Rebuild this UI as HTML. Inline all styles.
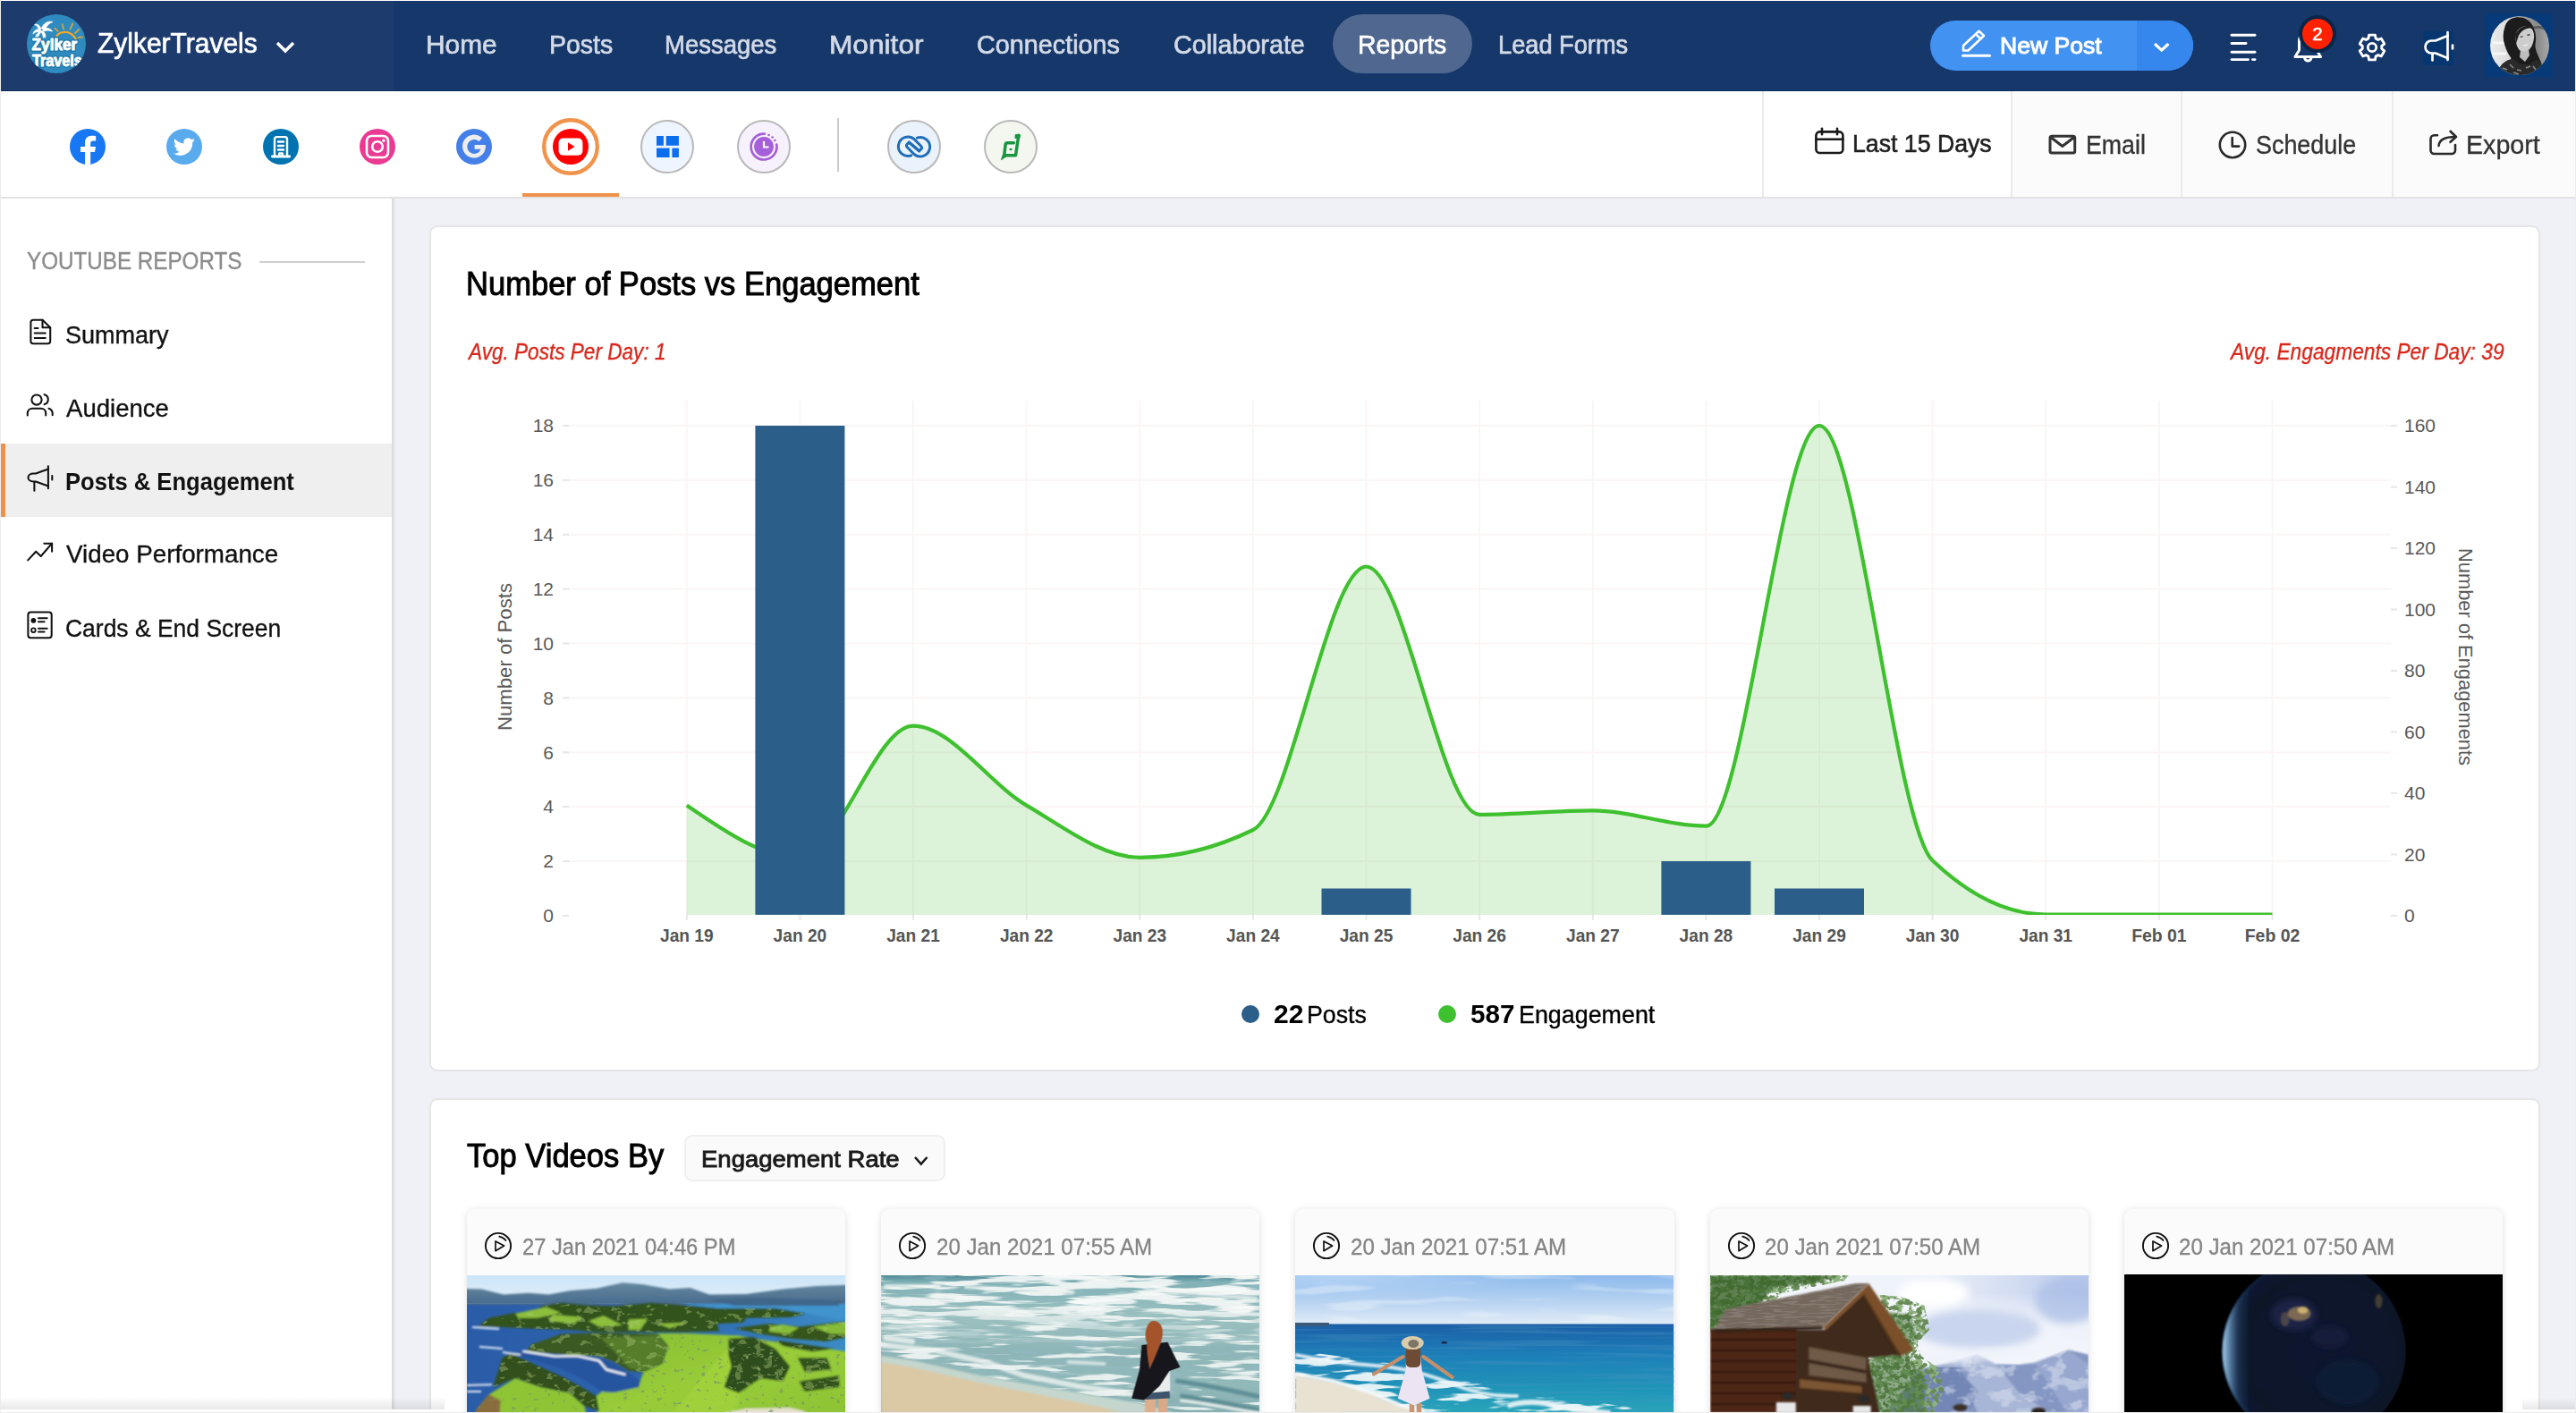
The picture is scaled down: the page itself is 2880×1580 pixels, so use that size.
<!DOCTYPE html>
<html lang="en"><head><meta charset="utf-8"><title>ZylkerTravels - YouTube Reports</title>
<style>
html,body{margin:0;padding:0}
body{width:2880px;height:1580px;overflow:hidden;background:#fff;position:relative;font-family:"Liberation Sans",sans-serif}
.a{position:absolute}
.t{position:absolute;line-height:1;white-space:pre;transform-origin:0 0}
.card{position:absolute;box-sizing:border-box;background:#fff;border:2px solid #e5e5e5;border-radius:9px}
.vc{position:absolute;top:1352px;width:423.2px;height:260px;background:#fbfbfb;border-radius:9px;box-shadow:0 1px 9px rgba(0,0,0,.13);overflow:hidden}
</style></head>
<body>
<div class="a" style="left:1px;top:1px;width:439px;height:101px;background:#1e3b6e;"></div>
<div class="a" style="left:440px;top:1px;width:2439px;height:101px;background:#16376a;"></div>
<div class="a" style="left:1px;top:100.5px;width:2878px;height:1.5px;background:#0f2c5c;"></div>
<svg class="a" style="left:30px;top:16px" width="66" height="66" viewBox="0 0 66 66" >
<defs><clipPath id="lgc"><circle cx="33" cy="33" r="33"/></clipPath></defs>
<circle cx="33" cy="33" r="33" fill="#2f8bbf"/>
<g clip-path="url(#lgc)">
<g fill="#fff" stroke="#fff" stroke-width=".8" stroke-linejoin="round">
<path d="M16.400 15.800C18.500 9.500 24 7.200 28.900 8.500c-4.500 1.500-7 4.500-8.500 9.300z"/>
<path d="M15.800 16.200C14.500 12 11.500 10.500 8.500 11.300c2.800 1.300 4.300 3.500 5.200 6.300z"/>
<path d="M15 17c-4.200-1-7.500 1.700-8.100 5.100 2.600-2.600 5.400-3.300 8.600-2.600z"/>
<path d="M18 16.500c4.400-2 8.900-.6 10.500 2.600-3.500-1.500-6.500-1.400-9.700 0z"/>
<path d="M15.200 18.200c-3 2.300-5 5-5.700 7.300l2.900.2c.8-2.200 2.300-4.600 4.600-6.600z"/>
<path d="M17.200 18.300c2.800 1.600 4.100 4.300 3.600 7.500l-2.800.1c.3-2.500-.5-4.700-2.300-6.500z"/>
</g>
<path d="M33.600 23.700C38 19 48.500 17 54.600 27.500" fill="none" stroke="#f5a623" stroke-width="2.300" stroke-linecap="round"/>
<g stroke="#f5a623" stroke-width="1.700" stroke-linecap="round" opacity=".9">
<path d="M31.200 15.500l3.500 3.300"/><path d="M39.600 11.200l1.600 5.300"/><path d="M51.300 10.500l-2.800 6.200"/><path d="M58.500 16.800l-4.600 4.200"/><path d="M62 25.300l-4.600.9"/>
</g>
<g font-family="'Liberation Sans',sans-serif" font-weight="700">
<g fill="#1f78a8" stroke="#1f78a8" stroke-width="3.600" stroke-linejoin="round">
<text x="5.600" y="40" font-size="17.500" textLength="50.600" lengthAdjust="spacingAndGlyphs">Zylker</text>
<text x="5.900" y="57.800" font-size="17.500" textLength="56" lengthAdjust="spacingAndGlyphs">Travels</text></g>
<g fill="#fff" stroke="#fff" stroke-width=".9" stroke-linejoin="round">
<text x="5.600" y="40" font-size="17.500" textLength="50.600" lengthAdjust="spacingAndGlyphs">Zylker</text>
<text x="5.900" y="57.800" font-size="17.500" textLength="56" lengthAdjust="spacingAndGlyphs">Travels</text></g>
</g>
</g></svg>
<svg class="a" style="left:304px;top:41.6px" width="30" height="21" viewBox="0 0 30 21" ><path d="M6 6L15.0 15L24 6" fill="none" stroke="#fff" stroke-width="3.5" stroke-linecap="butt" stroke-linejoin="miter"/></svg>
<div class="a" style="left:1490px;top:16px;width:156px;height:66px;background:#50688f;border-radius:33px"></div>
<div class="a" style="left:2158px;top:23px;width:294px;height:56px;border-radius:28px;background:#4292f2;overflow:hidden"><div class="a" style="left:230.5px;top:0;width:64px;height:56px;background:#3587ee"></div></div>
<svg class="a" style="left:2193px;top:33px" width="34" height="32" viewBox="0 0 34 32" ><g fill="none" stroke="#fff" stroke-width="2.600" stroke-linejoin="round" stroke-linecap="round">
<path d="M2 23.500V18L19.500 1.800 25 7 7.500 23.500z"/><path d="M16 5.200l5.500 5.200"/><path d="M1.500 29.300h30" stroke-width="3"/></g></svg>
<svg class="a" style="left:2403.2px;top:42.9px" width="27.4" height="19.1" viewBox="0 0 27.4 19.1" ><path d="M6 6L13.7 13.1L21.4 6" fill="none" stroke="#fff" stroke-width="3.2" stroke-linecap="butt" stroke-linejoin="miter"/></svg>
<svg class="a" style="left:2493px;top:37px" width="30" height="32" viewBox="0 0 30 32" ><g stroke="#fff" stroke-width="2.900" stroke-linecap="round">
<path d="M2 2.200h26"/><path d="M2 11.500h16"/><path d="M2 21.300h26"/><path d="M2 29.600h18.500"/><path d="M25.500 29.600h2.500"/></g></svg>
<svg class="a" style="left:2564px;top:33px" width="33" height="38" viewBox="0 0 33 38" ><g fill="none" stroke="#fff" stroke-width="3" stroke-linejoin="round" stroke-linecap="round">
<path d="M2 30.500h28.500l-4.500-7.500V13.500C26 7 21.500 2.500 16.200 2.500S6.500 7 6.500 13.500V23z"/>
<path d="M12.500 31.500c.5 2.500 2 3.500 3.800 3.500s3.300-1 3.800-3.500"/></g></svg>
<div class="a" style="left:2570px;top:17px;width:42px;height:42px;border-radius:50%;background:#0b2549"></div><div class="a" style="left:2574px;top:21px;width:34px;height:34px;border-radius:50%;background:#ff2100"></div><span class="a" style="left:2574px;top:21px;width:34px;height:34px;line-height:34px;text-align:center;color:#fff;font-size:20.500px;-webkit-text-stroke:.5px #fff">2</span>
<svg class="a" style="left:2634px;top:35px" width="36" height="36" viewBox="0 0 36 36" ><path d="M14.59 4.11L21.41 4.11L22.04 7.88L24.75 9.44L28.32 8.10L31.73 14.01L28.79 16.44L28.79 19.56L31.73 21.99L28.32 27.90L24.75 26.56L22.04 28.12L21.41 31.89L14.59 31.89L13.96 28.12L11.25 26.56L7.68 27.90L4.27 21.99L7.21 19.56L7.21 16.44L4.27 14.01L7.68 8.10L11.25 9.44L13.96 7.88Z" fill="none" stroke="#fff" stroke-width="2.900" stroke-linejoin="round"/><circle cx="18" cy="18" r="4.700" fill="none" stroke="#fff" stroke-width="2.800"/></svg>
<div class="a" style="left:2709px;top:35px;width:34px;height:38px;background:#06366f;"></div>
<svg class="a" style="left:2709.3px;top:33.3px" width="36.0" height="38.0" viewBox="0 0 36 38"><g fill="none" stroke="#fff" stroke-width="2.7" stroke-linecap="round" stroke-linejoin="round">
<path d="M27.500 3v31"/><path d="M27.500 7L14 12.500H9.500C5.500 12.500 2.500 15.500 2.500 19.500s3 7 7 7H14L27.500 32"/><path d="M10.500 27v7.500"/><path d="M33 17.500v4"/></g></svg>
<div class="a" style="left:2779px;top:15px;width:75px;height:71px;background:#063a78;"></div>
<svg class="a" style="left:2784px;top:18px" width="66" height="66" viewBox="0 0 66 66" ><defs><clipPath id="avc"><circle cx="33" cy="33" r="33"/></clipPath>
<linearGradient id="avbg" x1="0" x2="1"><stop offset="0" stop-color="#ececec"/><stop offset=".3" stop-color="#dcdcdc"/><stop offset=".55" stop-color="#a2a2a2"/><stop offset=".8" stop-color="#8a8a8a"/><stop offset="1" stop-color="#a8a8a8"/></linearGradient>
<filter id="avb" x="-10%" y="-10%" width="120%" height="120%"><feGaussianBlur stdDeviation="0.700"/></filter></defs>
<g clip-path="url(#avc)">
<rect width="66" height="66" fill="url(#avbg)"/>
<g filter="url(#avb)">
<path d="M46 14c6-3 12-2 18 2" stroke="#5a5a5a" stroke-width="2.500" fill="none"/>
<path d="M3 30h14M2 42h16" stroke="#f6f6f6" stroke-width="3" fill="none"/>
<path d="M28.400 1.400C22 2.500 18 6 16.500 12c-2.500 7-2.500 14 0 21 1.500 5 3.500 9 7 14l-6 19h34l6-13c-2-4-3.500-8-5.500-12.500 -1-4-1.800-6-1.500-9 1.500-7 .5-14-2.500-20C45 5 38 0 28.400 1.400z" fill="#1b1b1b"/>
<path d="M30 17c3-5 9-7 14.500-4.500 3.500 2 5 7 4.500 12-.6 6-3 11.500-7 14.500-3.500 2.500-7.500 1.500-10-2-3.500-5-4.500-13-2-20z" fill="#cdcdcd"/>
<path d="M28.500 22c1-6 6-11 14-11l4 2.500c-6-.5-11 2-14.500 8l-3 9z" fill="#1b1b1b"/>
<path d="M34 38c3 2 6.500 1.500 9-1l1 7-5 7-6-5z" fill="#bdbdbd"/>
<path d="M11 57c3-5 8-8 14-9.500l8 6 10 1 9-6 6 6-4 14H9z" fill="#2c2c2c"/>
<path d="M14 58l5 2M22 54l4 4M30 60l5 1M40 58l5-2M48 56l3 4M26 63l6 2" stroke="#8a8a8a" stroke-width="1.500" fill="none"/>
<path d="M35.500 31.500c2.500 1.500 5.500 1 7.500-1.500-1 3.500-4.500 5-7.500 1.500z" fill="#f4f4f4"/>
<path d="M33.500 23.500l3-1M41.500 21.500l3-.8" stroke="#333" stroke-width="1.300"/>
</g></g></svg>
<div class="a" style="left:1px;top:102px;width:2878px;height:118px;background:#fff;"></div>
<div class="a" style="left:2250px;top:102px;width:629px;height:118px;background:#fbfbfb;"></div>
<div class="a" style="left:1970px;top:102px;width:2px;height:118px;background:#ebebeb;"></div>
<div class="a" style="left:2248px;top:102px;width:2px;height:118px;background:#ebebeb;"></div>
<div class="a" style="left:2438px;top:102px;width:2px;height:118px;background:#ebebeb;"></div>
<div class="a" style="left:2674px;top:102px;width:2px;height:118px;background:#ebebeb;"></div>
<div class="a" style="left:1px;top:220px;width:2878px;height:2.2px;background:#e3e3e4;"></div>
<div class="a" style="left:34px;top:222px;width:404px;height:4px;background:linear-gradient(to bottom,rgba(0,0,0,.04),rgba(0,0,0,0))"></div>
<div class="a" style="left:584px;top:216px;width:108px;height:4px;background:#f0914a;"></div>
<svg class="a" style="left:77.85px;top:143.85px" width="40" height="40" viewBox="0 0 40 40" ><defs><clipPath id="fbc"><circle cx="20" cy="20" r="20"/></clipPath></defs>
<circle cx="20" cy="20" r="20" fill="#1877f2"/>
<path clip-path="url(#fbc)" d="M17 41V26h-5v-6h5v-4.500c0-5 3-7.800 7.500-7.800 1.800 0 3.200.2 4.700.4v5.400h-2.700c-2.500 0-3.300 1.300-3.300 3.100V20h5.800l-1 6h-4.800v15z" fill="#fff"/></svg>
<svg class="a" style="left:185.9px;top:143.85px" width="40" height="40" viewBox="0 0 40 40" ><circle cx="20" cy="20" r="20" fill="#5aabee"/>
<path d="M31.800 12.600c-.9.400-1.800.7-2.800.8 1-.6 1.800-1.600 2.100-2.700-.9.600-2 1-3.100 1.200a4.900 4.900 0 0 0-8.400 4.500c-4.100-.2-7.700-2.200-10.100-5.100-1.300 2.200-.7 5.100 1.500 6.500-.8 0-1.600-.2-2.200-.6 0 2.400 1.700 4.400 3.900 4.900-.7.200-1.500.2-2.200.1.600 2 2.400 3.400 4.600 3.400a9.900 9.900 0 0 1-7.300 2 13.900 13.900 0 0 0 21.400-12.400c1-.7 1.800-1.600 2.600-2.600z" fill="#fff"/></svg>
<svg class="a" style="left:293.9px;top:143.85px" width="40" height="40" viewBox="0 0 40 40" ><circle cx="20" cy="20" r="20" fill="#0073b1"/>
<g fill="none" stroke="#fff" stroke-width="2.400" stroke-linecap="round" stroke-linejoin="round">
<path d="M13 30.500V11.500c0-1.400 1-2.400 2.400-2.400h9.200c1.400 0 2.400 1 2.400 2.400v19"/><path d="M10.300 31h19.400" stroke-width="2.800"/>
<path d="M17 14.500h6M17 19h6M17 23.500h6"/><path d="M18.200 30.500v-3h3.600v3"/></g></svg>
<svg class="a" style="left:402px;top:143.85px" width="40" height="40" viewBox="0 0 40 40" ><circle cx="20" cy="20" r="20" fill="#ea3a93"/>
<rect x="8" y="8" width="24" height="24" rx="5.500" fill="none" stroke="#fff" stroke-width="2.600"/>
<circle cx="20" cy="20" r="5.800" fill="none" stroke="#fff" stroke-width="2.600"/><circle cx="26.800" cy="13.200" r="1.700" fill="#fff"/></svg>
<svg class="a" style="left:509.9px;top:143.85px" width="40" height="40" viewBox="0 0 40 40" ><circle cx="20" cy="20" r="20" fill="#4480e8"/>
<path d="M32.600 18H20.600v4.800h6.700c-.8 3.300-3.600 5.200-7 5.200a8 8 0 1 1 5.200-14.100l3.600-3.600A13 13 0 1 0 33 20c0-.7-.1-1.400-.4-2z" fill="#eee"/></svg>
<svg class="a" style="left:606px;top:131.85px" width="64" height="64" viewBox="0 0 64 64" ><circle cx="32" cy="32" r="29.800" fill="#fff" stroke="#f0944d" stroke-width="4.400"/>
<circle cx="32" cy="32" r="20" fill="#f00"/><rect x="18.600" y="22.500" width="26.800" height="19.200" rx="5" fill="#fff"/><path d="M29 27.300l7.500 4.700-7.500 4.700z" fill="#f00"/></svg>
<div class="a" style="left:716px;top:133.85px;width:60px;height:60px;box-sizing:border-box;border:2.200px solid #b9b9b9;border-radius:50%;background:#eff5ff"></div>
<svg class="a" style="left:733.5px;top:151.7px" width="25" height="24.4" viewBox="0 0 25 24.4" ><g fill="#0b6ef0"><rect x="0" y="0" width="7.900" height="10.800"/><rect x="10.700" y="0" width="14.200" height="10.800"/><rect x="0" y="13.600" width="14.500" height="10.700"/><rect x="17.400" y="13.600" width="7.500" height="10.700"/></g></svg>
<div class="a" style="left:824px;top:133.85px;width:60px;height:60px;box-sizing:border-box;border:2.200px solid #b9b9b9;border-radius:50%;background:#f7f1fd"></div>
<svg class="a" style="left:837px;top:146.85px" width="34" height="34" viewBox="0 0 34 34" ><circle cx="17" cy="17" r="10.900" fill="#a55fd8"/>
<path d="M17.800 2.700A14.400 14.400 0 1 0 31.200 14.500" fill="none" stroke="#a55fd8" stroke-width="2.700" stroke-linecap="round"/>
<g fill="#a55fd8"><circle cx="22.500" cy="4" r="1.300"/><circle cx="26.500" cy="6.500" r="1.300"/><circle cx="29.300" cy="10" r="1.300"/></g>
<path d="M17 11v6.500h5.500" fill="none" stroke="#fff" stroke-width="2.200"/></svg>
<div class="a" style="left:936px;top:132px;width:2px;height:60px;background:#cbcbcb"></div>
<div class="a" style="left:992px;top:133.85px;width:60px;height:60px;box-sizing:border-box;border:2.200px solid #b9b9b9;border-radius:50%;background:#eaf2fb"></div>
<svg class="a" style="left:1000px;top:148.85px" width="44" height="30" viewBox="0 0 44 30" ><g fill="none" stroke="#1f6db8" stroke-width="3" stroke-linecap="round" stroke-linejoin="round" transform="translate(22 15)">
<path d="M-3.42 9.82A10.7 10.7 0 1 1 -0.02 -8.50L7.60 -0.70A2.6 2.6 0 0 1 4.26 3.28L-5.70 -5.08"/><path d="M-3.42 9.82A10.7 10.7 0 1 1 -0.02 -8.50L7.60 -0.70A2.6 2.6 0 0 1 4.26 3.28L-5.70 -5.08" transform="rotate(180)"/></g></svg>
<div class="a" style="left:1099.8px;top:133.85px;width:60px;height:60px;box-sizing:border-box;border:2.200px solid #b9b9b9;border-radius:50%;background:#f3f7f0"></div>
<svg class="a" style="left:1115.6px;top:146.85px" width="28" height="34" viewBox="0 0 28 34" ><g transform="translate(14 17)"><g fill="none" stroke="#1a9641" stroke-width="3.500" stroke-linejoin="round" stroke-linecap="round">
<path d="M3.400 -4.300H-3.600c-1.300 0-2.100.7-2.300 2L-7.300 9.800H5.500L8.800 -12.400"/></g>
<path d="M4.800 -13.800l4.300-.5c1.200-.1 2 .7 1.800 1.900l-.5 3-5.900.5z" fill="#1a9641"/>
<path d="M-9 9.500l-1.500 5.200 6-4.200z" fill="#1a9641" stroke="#1a9641" stroke-width="1" stroke-linejoin="round"/>
<ellipse cx="0" cy="3" rx="1.700" ry="1.300" fill="#1a9641"/></g></svg>
<svg class="a" style="left:2027px;top:142px" width="37" height="32" viewBox="0 0 37 32" ><g fill="none" stroke="#1a1a1a" stroke-width="2.600" stroke-linecap="round">
<rect x="3.400" y="5.400" width="30" height="23.600" rx="4"/><path d="M3.400 13.800h30"/><path d="M10 1.800v6.500M27 1.800v6.500"/></g></svg>
<svg class="a" style="left:2289px;top:149px" width="34" height="26" viewBox="0 0 34 26" ><g fill="none" stroke="#333" stroke-width="3" stroke-linejoin="round" stroke-linecap="round">
<rect x="3" y="3.200" width="27.700" height="18.800" rx="2"/><path d="M4.500 5l12.300 9.500L29.200 5"/></g></svg>
<svg class="a" style="left:2479px;top:144.7px" width="34" height="34" viewBox="0 0 34 34" ><g fill="none" stroke="#2a2a2a" stroke-width="2.600" stroke-linecap="round" stroke-linejoin="round">
<circle cx="17" cy="17" r="14.200"/><path d="M16.700 9v9.600h7.500"/></g></svg>
<svg class="a" style="left:2714px;top:144px" width="36" height="32" viewBox="0 0 36 32" ><g fill="none" stroke="#2a2a2a" stroke-width="2.600" stroke-linecap="round" stroke-linejoin="round">
<path d="M11 7.300H7.500c-2.300 0-4 1.700-4 4V24c0 2.300 1.700 4 4 4H27c2.300 0 4-1.700 4-4v-6"/>
<path d="M12.500 19c.5-6.500 6-10 19-10"/><path d="M25.500 2.800L32 9l-6.500 5.800"/></g></svg>
<div class="a" style="left:440px;top:222.2px;width:2439px;height:1356.8px;background:#eff1f6;"></div>
<div class="a" style="left:1px;top:222.2px;width:437px;height:1356.8px;background:#fff;"></div>
<div class="a" style="left:438px;top:222.2px;width:2px;height:1356.8px;background:#dcdcdc;"></div>
<div class="a" style="left:440px;top:222.2px;width:3px;height:1356.8px;background:linear-gradient(to right,rgba(0,0,0,.05),rgba(0,0,0,0))"></div>
<div class="a" style="left:1px;top:496px;width:437px;height:82px;background:#efefef;"></div>
<div class="a" style="left:1px;top:496px;width:5px;height:82px;background:#f0914a;"></div>
<div class="a" style="left:290px;top:291.7px;width:118px;height:2px;background:#cfcfcf;"></div>
<svg class="a" style="left:30px;top:354px" width="30" height="34" viewBox="0 0 30 34" ><g fill="none" stroke="#111" stroke-width="2.050" stroke-linecap="round" stroke-linejoin="round"><path d="M17.500 3.700H7.200c-1.700 0-2.800 1.200-2.800 2.800v21c0 1.700 1.200 2.800 2.800 2.800h16.200c1.700 0 2.800-1.200 2.800-2.800V12.300z"/><path d="M17.500 3.700v8.600h8.700"/>
<path d="M8.700 12.900h3.800M8.700 18.400h12.100M8.700 24h12.100"/></g></svg>
<svg class="a" style="left:28px;top:438px" width="34" height="30" viewBox="0 0 34 30" ><g fill="none" stroke="#111" stroke-width="2.050" stroke-linecap="round" stroke-linejoin="round"><circle cx="13" cy="9" r="5.600"/><path d="M2.800 26.500v-2.300c0-3.200 2.400-5.500 5.500-5.500h9.400c3.200 0 5.500 2.400 5.500 5.500v2.300"/>
<path d="M21.500 3.200c2.600.6 4.300 2.900 4.300 5.500s-1.700 4.800-4.300 5.500"/><path d="M26.500 18.800c2.500.8 4.200 3 4.200 5.600v1.800"/></g></svg>
<svg class="a" style="left:28px;top:518px" width="34" height="34" viewBox="0 0 34 34" ><g fill="none" stroke="#111" stroke-width="2.050" stroke-linecap="round" stroke-linejoin="round"><path d="M25.900 3.200v25"/><path d="M25.900 6.500L12 11.500H9.500C6 11.500 3.500 13.300 3.500 16s2.500 4.500 6 4.500H12L25.900 25.500"/><path d="M10.400 21.500v9.300"/><path d="M30.300 14v4.500"/></g></svg>
<svg class="a" style="left:28px;top:604px" width="34" height="26" viewBox="0 0 34 26" ><g fill="none" stroke="#111" stroke-width="2.050" stroke-linecap="round" stroke-linejoin="round"><path d="M3.200 22.400l9-9.700 5.500 5.300L30.100 3.700"/><path d="M21.300 3.700h8.800v9"/></g></svg>
<svg class="a" style="left:28px;top:681px" width="34" height="36" viewBox="0 0 34 36" ><g fill="none" stroke="#111" stroke-width="2.050" stroke-linecap="round" stroke-linejoin="round"><rect x="3.400" y="3.500" width="26.300" height="28.700" rx="3"/><path d="M15 10.300h9.700M15 14.200h6.600M15 21.700h9.700M15 25.600h6.600" stroke-width="2"/><circle cx="9.400" cy="23.700" r="2.300" stroke-width="1.800"/></g><circle cx="9.400" cy="12.800" r="2.900" fill="#111"/></svg>
<div class="card" style="left:480px;top:252.2px;width:2360px;height:945.8px"></div>
<div class="card" style="left:480px;top:1227.8px;width:2360px;height:420px"></div>
<svg class="a" style="left:0;top:0" width="2880" height="1580" viewBox="0 0 2880 1580" font-family="'Liberation Sans',sans-serif">
<rect x="629" y="1022.9" width="7" height="2" fill="#e6e6e6"/>
<rect x="635" y="962.0" width="2038" height="2" fill="#fbf5f5"/>
<rect x="629" y="962.0" width="7" height="2" fill="#e6e6e6"/>
<rect x="635" y="901.1" width="2038" height="2" fill="#fbf5f5"/>
<rect x="629" y="901.1" width="7" height="2" fill="#e6e6e6"/>
<rect x="635" y="840.3" width="2038" height="2" fill="#fbf5f5"/>
<rect x="629" y="840.3" width="7" height="2" fill="#e6e6e6"/>
<rect x="635" y="779.4" width="2038" height="2" fill="#fbf5f5"/>
<rect x="629" y="779.4" width="7" height="2" fill="#e6e6e6"/>
<rect x="635" y="718.5" width="2038" height="2" fill="#fbf5f5"/>
<rect x="629" y="718.5" width="7" height="2" fill="#e6e6e6"/>
<rect x="635" y="657.6" width="2038" height="2" fill="#fbf5f5"/>
<rect x="629" y="657.6" width="7" height="2" fill="#e6e6e6"/>
<rect x="635" y="596.8" width="2038" height="2" fill="#fbf5f5"/>
<rect x="629" y="596.8" width="7" height="2" fill="#e6e6e6"/>
<rect x="635" y="535.9" width="2038" height="2" fill="#fbf5f5"/>
<rect x="629" y="535.9" width="7" height="2" fill="#e6e6e6"/>
<rect x="635" y="475.0" width="2038" height="2" fill="#fbf5f5"/>
<rect x="629" y="475.0" width="7" height="2" fill="#e6e6e6"/>
<rect x="2673" y="1022.9" width="7" height="2" fill="#e6e6e6"/>
<rect x="2673" y="954.4" width="7" height="2" fill="#e6e6e6"/>
<rect x="2673" y="885.9" width="7" height="2" fill="#e6e6e6"/>
<rect x="2673" y="817.4" width="7" height="2" fill="#e6e6e6"/>
<rect x="2673" y="749.0" width="7" height="2" fill="#e6e6e6"/>
<rect x="2673" y="680.5" width="7" height="2" fill="#e6e6e6"/>
<rect x="2673" y="612.0" width="7" height="2" fill="#e6e6e6"/>
<rect x="2673" y="543.5" width="7" height="2" fill="#e6e6e6"/>
<rect x="2673" y="475.0" width="7" height="2" fill="#e6e6e6"/>
<rect x="766.8" y="448" width="2" height="574.9" fill="#fbf5f5"/>
<rect x="766.8" y="1022.9" width="2" height="6" fill="#e8e8e8"/>
<rect x="893.4" y="448" width="2" height="574.9" fill="#fbf5f5"/>
<rect x="893.4" y="1022.9" width="2" height="6" fill="#e8e8e8"/>
<rect x="1020.0" y="448" width="2" height="574.9" fill="#fbf5f5"/>
<rect x="1020.0" y="1022.9" width="2" height="6" fill="#e8e8e8"/>
<rect x="1146.7" y="448" width="2" height="574.9" fill="#fbf5f5"/>
<rect x="1146.7" y="1022.9" width="2" height="6" fill="#e8e8e8"/>
<rect x="1273.3" y="448" width="2" height="574.9" fill="#fbf5f5"/>
<rect x="1273.3" y="1022.9" width="2" height="6" fill="#e8e8e8"/>
<rect x="1399.9" y="448" width="2" height="574.9" fill="#fbf5f5"/>
<rect x="1399.9" y="1022.9" width="2" height="6" fill="#e8e8e8"/>
<rect x="1526.5" y="448" width="2" height="574.9" fill="#fbf5f5"/>
<rect x="1526.5" y="1022.9" width="2" height="6" fill="#e8e8e8"/>
<rect x="1653.1" y="448" width="2" height="574.9" fill="#fbf5f5"/>
<rect x="1653.1" y="1022.9" width="2" height="6" fill="#e8e8e8"/>
<rect x="1779.8" y="448" width="2" height="574.9" fill="#fbf5f5"/>
<rect x="1779.8" y="1022.9" width="2" height="6" fill="#e8e8e8"/>
<rect x="1906.4" y="448" width="2" height="574.9" fill="#fbf5f5"/>
<rect x="1906.4" y="1022.9" width="2" height="6" fill="#e8e8e8"/>
<rect x="2033.0" y="448" width="2" height="574.9" fill="#fbf5f5"/>
<rect x="2033.0" y="1022.9" width="2" height="6" fill="#e8e8e8"/>
<rect x="2159.6" y="448" width="2" height="574.9" fill="#fbf5f5"/>
<rect x="2159.6" y="1022.9" width="2" height="6" fill="#e8e8e8"/>
<rect x="2286.2" y="448" width="2" height="574.9" fill="#fbf5f5"/>
<rect x="2286.2" y="1022.9" width="2" height="6" fill="#e8e8e8"/>
<rect x="2412.9" y="448" width="2" height="574.9" fill="#fbf5f5"/>
<rect x="2412.9" y="1022.9" width="2" height="6" fill="#e8e8e8"/>
<rect x="2539.5" y="448" width="2" height="574.9" fill="#fbf5f5"/>
<rect x="2539.5" y="1022.9" width="2" height="6" fill="#e8e8e8"/>
<path d="M767.8,900.6C810.0,929.7 852.2,958.8 894.4,958.8C936.6,958.8 978.8,811.6 1021.0,811.6C1063.2,811.6 1105.5,876.1 1147.7,900.6C1189.9,925.2 1232.1,958.8 1274.3,958.8C1316.5,958.8 1358.7,948.6 1400.9,928.0C1443.1,907.5 1485.3,633.5 1527.5,633.5C1569.7,633.5 1611.9,910.9 1654.1,910.9C1696.3,910.9 1738.6,906.4 1780.8,906.4C1823.0,906.4 1865.2,923.6 1907.4,923.6C1949.6,923.6 1991.8,476.0 2034.0,476.0C2076.2,476.0 2118.4,922.1 2160.6,962.3C2202.8,1002.4 2245.0,1022.5 2287.2,1022.5C2329.4,1022.5 2371.7,1022.5 2413.9,1022.5C2456.1,1022.5 2498.3,1022.5 2540.5,1022.5L2540.5,1022.9L767.8,1022.9Z" fill="#3dbf2f" fill-opacity="0.18"/>
<clipPath id="plc"><rect x="600" y="440" width="2100" height="582.9"/></clipPath>
<path d="M767.8,900.6C810.0,929.7 852.2,958.8 894.4,958.8C936.6,958.8 978.8,811.6 1021.0,811.6C1063.2,811.6 1105.5,876.1 1147.7,900.6C1189.9,925.2 1232.1,958.8 1274.3,958.8C1316.5,958.8 1358.7,948.6 1400.9,928.0C1443.1,907.5 1485.3,633.5 1527.5,633.5C1569.7,633.5 1611.9,910.9 1654.1,910.9C1696.3,910.9 1738.6,906.4 1780.8,906.4C1823.0,906.4 1865.2,923.6 1907.4,923.6C1949.6,923.6 1991.8,476.0 2034.0,476.0C2076.2,476.0 2118.4,922.1 2160.6,962.3C2202.8,1002.4 2245.0,1022.5 2287.2,1022.5C2329.4,1022.5 2371.7,1022.5 2413.9,1022.5C2456.1,1022.5 2498.3,1022.5 2540.5,1022.5" fill="none" stroke="#3fc02f" stroke-width="4.2" stroke-linejoin="round" stroke-linecap="butt" clip-path="url(#plc)"/>
<rect x="844.4" y="476.0" width="100" height="546.9" fill="#2b5f89"/>
<rect x="1477.5" y="993.5" width="100" height="29.4" fill="#2b5f89"/>
<rect x="1857.4" y="963.0" width="100" height="59.9" fill="#2b5f89"/>
<rect x="1984.0" y="993.5" width="100" height="29.4" fill="#2b5f89"/>
<g fill="#595959" font-size="21">
<text x="619" y="1031.1" text-anchor="end">0</text>
<text x="619" y="970.2" text-anchor="end">2</text>
<text x="619" y="909.3" text-anchor="end">4</text>
<text x="619" y="848.5" text-anchor="end">6</text>
<text x="619" y="787.6" text-anchor="end">8</text>
<text x="619" y="726.7" text-anchor="end">10</text>
<text x="619" y="665.8" text-anchor="end">12</text>
<text x="619" y="605.0" text-anchor="end">14</text>
<text x="619" y="544.1" text-anchor="end">16</text>
<text x="619" y="483.2" text-anchor="end">18</text>
<text x="2688" y="1031.1">0</text>
<text x="2688" y="962.6">20</text>
<text x="2688" y="894.1">40</text>
<text x="2688" y="825.6">60</text>
<text x="2688" y="757.2">80</text>
<text x="2688" y="688.7">100</text>
<text x="2688" y="620.2">120</text>
<text x="2688" y="551.7">140</text>
<text x="2688" y="483.2">160</text>
</g>
<g fill="#555" font-size="20.5" font-weight="700" text-anchor="middle" lengthAdjust="spacingAndGlyphs">
<text x="767.8" y="1053.1" textLength="59.6" lengthAdjust="spacingAndGlyphs">Jan 19</text>
<text x="894.4" y="1053.1" textLength="59.6" lengthAdjust="spacingAndGlyphs">Jan 20</text>
<text x="1021.0" y="1053.1" textLength="59.6" lengthAdjust="spacingAndGlyphs">Jan 21</text>
<text x="1147.7" y="1053.1" textLength="59.6" lengthAdjust="spacingAndGlyphs">Jan 22</text>
<text x="1274.3" y="1053.1" textLength="59.6" lengthAdjust="spacingAndGlyphs">Jan 23</text>
<text x="1400.9" y="1053.1" textLength="59.6" lengthAdjust="spacingAndGlyphs">Jan 24</text>
<text x="1527.5" y="1053.1" textLength="59.6" lengthAdjust="spacingAndGlyphs">Jan 25</text>
<text x="1654.1" y="1053.1" textLength="59.6" lengthAdjust="spacingAndGlyphs">Jan 26</text>
<text x="1780.8" y="1053.1" textLength="59.6" lengthAdjust="spacingAndGlyphs">Jan 27</text>
<text x="1907.4" y="1053.1" textLength="59.6" lengthAdjust="spacingAndGlyphs">Jan 28</text>
<text x="2034.0" y="1053.1" textLength="59.6" lengthAdjust="spacingAndGlyphs">Jan 29</text>
<text x="2160.6" y="1053.1" textLength="59.6" lengthAdjust="spacingAndGlyphs">Jan 30</text>
<text x="2287.2" y="1053.1" textLength="59.6" lengthAdjust="spacingAndGlyphs">Jan 31</text>
<text x="2413.9" y="1053.1" textLength="61.5" lengthAdjust="spacingAndGlyphs">Feb 01</text>
<text x="2540.5" y="1053.1" textLength="61.5" lengthAdjust="spacingAndGlyphs">Feb 02</text>
</g>
<g fill="#595959" font-size="22">
<text transform="translate(571.5,734.5) rotate(-90)" text-anchor="middle" textLength="165" lengthAdjust="spacingAndGlyphs">Number of Posts</text>
<text transform="translate(2749,734.5) rotate(90)" text-anchor="middle" textLength="243" lengthAdjust="spacingAndGlyphs">Number of Engagements</text>
</g>
</svg>
<div class="a" style="left:1388px;top:1124px;width:20px;height:20px;border-radius:50%;background:#2b5f89"></div>
<div class="a" style="left:1608px;top:1124px;width:20px;height:20px;border-radius:50%;background:#3fc02f"></div>
<div class="a" style="left:765px;top:1269px;width:292px;height:52px;box-sizing:border-box;border:2px solid #efefef;border-radius:9px;background:#fafafa"></div>
<svg class="a" style="left:1017px;top:1287.5px" width="25.5" height="19.5" viewBox="0 0 25.5 19.5" ><path d="M6 6L12.75 13.5L19.5 6" fill="none" stroke="#1a1a1a" stroke-width="2.6" stroke-linecap="butt" stroke-linejoin="miter"/></svg>
<div class="vc" style="left:522px"></div>
<svg class="a" style="left:522px;top:1426px" width="423.2" height="154" viewBox="0 0 424 154" preserveAspectRatio="none"><defs><linearGradient id="i1s" x1="0" y1="0" x2="0" y2="1"><stop offset="0" stop-color="#cbe5f9"/><stop offset=".2" stop-color="#e2eef6"/></linearGradient>
<linearGradient id="i1w" x1="0" y1="0" x2="1" y2="0"><stop offset="0" stop-color="#2a5ca8"/><stop offset=".55" stop-color="#2e66b0"/><stop offset="1" stop-color="#3c8cc6"/></linearGradient>
<linearGradient id="i1f" x1="0" y1="0" x2="0" y2="1"><stop offset="0" stop-color="#66889f"/><stop offset="1" stop-color="#476b8d"/></linearGradient>
<linearGradient id="i1h" x1="0" y1="0" x2="1" y2="1"><stop offset="0" stop-color="#86bd33"/><stop offset=".5" stop-color="#98cc38"/><stop offset="1" stop-color="#8cc335"/></linearGradient>
<filter id="b1" x="-5%" y="-5%" width="110%" height="110%"><feGaussianBlur stdDeviation="0.8"/></filter>
<filter id="n1" x="0" y="0" width="100%" height="100%"><feTurbulence type="fractalNoise" baseFrequency="0.16 0.22" numOctaves="2" seed="7"/><feColorMatrix values="0 0 0 0 .20  0 0 0 0 .33  0 0 0 0 .12  0 0 0 -20 6.4"/></filter>
<filter id="n1b" x="0" y="0" width="100%" height="100%"><feTurbulence type="fractalNoise" baseFrequency="0.09 0.14" numOctaves="3" seed="11"/><feColorMatrix values="0 0 0 0 .42  0 0 0 0 .58  0 0 0 0 .2  0 0 0 -12 5.0"/></filter>
<clipPath id="c1h"><polygon points="148.0,64.6 164.6,65.0 247.0,65.0 304.5,67.5 362.0,77.4 430.0,85.6 430.0,160.0 135.0,160.0 148.0,151.4 144.9,135.0 151.4,130.0 164.6,130.9 192.6,125.0 194.2,118.5 197.5,108.6 219.0,98.8 225.5,79.0 214.0,65.8" fill="#000" /><polygon points="9.9,151.4 24.7,133.3 54.3,115.2 82.3,125.0 115.2,131.7 131.7,146.5 135.0,160.0 9.9,160.0" fill="#000" /></clipPath>
<clipPath id="c1d"><polygon points="13.2,56.8 24.7,47.7 49.4,42.8 74.0,41.2 85.6,33.7 107.0,30.5 131.7,32.9 164.6,34.6 205.8,30.5 238.7,32.9 279.8,37.0 345.7,37.0 380.2,42.8 362.0,46.9 312.8,47.7 309.5,52.7 279.8,54.3 283.0,62.6 247.0,63.4 181.0,63.4 148.0,63.4 115.2,60.9 65.8,59.3" fill="#000" /><polygon points="299.6,59.3 337.4,54.3 373.7,57.6 430.0,51.0 430.0,68.3 401.6,74.0 362.0,70.8 329.0,65.8" fill="#000" /><polygon points="65.8,85.6 72.4,77.4 105.3,65.8 148.0,64.2 214.0,65.8 225.5,79.0 219.0,98.8 197.5,108.6 181.0,107.0 164.6,97.1 148.0,90.5 115.2,88.9" fill="#000" /><polygon points="293.0,70.8 321.0,69.1 345.7,82.3 362.0,102.0 354.0,118.5 329.0,115.2 304.5,131.7 288.0,125.0 296.3,102.0 293.0,88.9" fill="#000" /><polygon points="370.4,92.2 403.3,92.2 408.2,105.3 378.6,108.6" fill="#000" /><polygon points="372.0,118.5 416.5,112.0 418.0,125.0 378.6,130.0" fill="#000" /><polygon points="345.7,72.4 411.5,82.3 386.8,85.6 354.0,79.0" fill="#000" /><polygon points="29.6,125.0 39.5,92.2 49.4,87.2 74.0,98.8 107.0,113.6 128.4,125.0 144.9,135.0 148.0,151.4 131.7,146.5 115.2,131.7 82.3,125.0 54.3,115.2" fill="#000" /></clipPath></defs>
<rect width="424" height="154" fill="url(#i1s)"/>
<rect y="32" width="424" height="122" fill="url(#i1w)"/>
<g filter="url(#b1)">
<polygon points="-6.0,14.8 16.5,15.6 41.0,21.4 69.0,19.8 92.0,21.4 115.0,17.3 145.0,14.8 174.5,8.2 197.5,10.2 227.0,15.6 250.0,14.0 271.6,21.4 312.8,21.0 354.0,15.6 391.8,11.9 430.0,10.7 430.0,33.0 -6.0,33.0" fill="url(#i1f)" />
<polygon points="240.0,32.0 430.0,32.0 430.0,52.0 380.0,43.0 345.0,37.0 280.0,37.0" fill="#3f93cc" />
<polygon points="270.0,27.0 330.0,25.0 420.0,28.0 416.0,34.0 300.0,34.0" fill="#41668a" />
<polygon points="13.2,56.8 24.7,47.7 49.4,42.8 74.0,41.2 85.6,33.7 107.0,30.5 131.7,32.9 164.6,34.6 205.8,30.5 238.7,32.9 279.8,37.0 345.7,37.0 380.2,42.8 362.0,46.9 312.8,47.7 309.5,52.7 279.8,54.3 283.0,62.6 247.0,63.4 181.0,63.4 148.0,63.4 115.2,60.9 65.8,59.3" fill="#33521f" />
<polygon points="54.3,42.8 88.9,35.4 105.3,42.0 79.0,47.7 57.6,47.7" fill="#8dbf3c" /><polygon points="136.6,51.0 153.0,45.3 174.5,56.0 148.0,57.6" fill="#8dbf3c" /><polygon points="181.0,49.4 202.5,48.6 194.2,60.9 181.0,60.9" fill="#8dbf3c" /><polygon points="214.0,54.3 247.0,52.7 227.0,59.3" fill="#8dbf3c" /><polygon points="96.0,44.0 130.0,47.0 120.0,54.0 92.0,51.0" fill="#8dbf3c" />
<polygon points="299.6,59.3 337.4,54.3 373.7,57.6 430.0,51.0 430.0,68.3 401.6,74.0 362.0,70.8 329.0,65.8" fill="#35541f" />
<polygon points="340.0,57.0 354.0,55.0 372.0,58.4 360.5,65.8 338.0,63.0" fill="#86bb38" /><polygon points="386.8,57.6 430.0,51.9 430.0,65.8 408.0,65.8" fill="#86bb38" />
<polygon points="148.0,64.6 164.6,65.0 247.0,65.0 304.5,67.5 362.0,77.4 430.0,85.6 430.0,160.0 135.0,160.0 148.0,151.4 144.9,135.0 151.4,130.0 164.6,130.9 192.6,125.0 194.2,118.5 197.5,108.6 219.0,98.8 225.5,79.0 214.0,65.8" fill="url(#i1h)" />
<polygon points="230.0,154.0 300.0,72.0 318.0,90.0 300.0,154.0" fill="#a2d23c" opacity=".8"/>
<polygon points="65.8,85.6 72.4,77.4 105.3,65.8 148.0,64.2 214.0,65.8 225.5,79.0 219.0,98.8 197.5,108.6 181.0,107.0 164.6,97.1 148.0,90.5 115.2,88.9" fill="#3a5a22" />
<polygon points="150.0,70.0 214.0,67.0 224.0,80.0 218.0,98.0 198.0,107.0 182.0,104.0 170.0,90.0" fill="#5f8a2c" opacity=".75"/>
<polygon points="293.0,70.8 321.0,69.1 345.7,82.3 362.0,102.0 354.0,118.5 329.0,115.2 304.5,131.7 288.0,125.0 296.3,102.0 293.0,88.9" fill="#2f4d1d" /><polygon points="370.4,92.2 403.3,92.2 408.2,105.3 378.6,108.6" fill="#33521f" /><polygon points="372.0,118.5 416.5,112.0 418.0,125.0 378.6,130.0" fill="#33521f" /><polygon points="345.7,72.4 411.5,82.3 386.8,85.6 354.0,79.0" fill="#2f4d1d" />
<polygon points="54.3,85.6 65.8,85.6 115.2,89.7 148.0,91.4 164.6,98.8 181.0,108.6 194.2,118.5 192.6,125.0 164.6,130.9 151.4,130.0 128.4,115.2 98.8,102.0 69.0,93.8 54.3,88.9" fill="#27559f" />
<polygon points="9.9,151.4 24.7,133.3 54.3,115.2 82.3,125.0 115.2,131.7 131.7,146.5 135.0,160.0 9.9,160.0" fill="#8fc535" />
<polygon points="29.6,125.0 39.5,92.2 49.4,87.2 74.0,98.8 107.0,113.6 128.4,125.0 144.9,135.0 148.0,151.4 131.7,146.5 115.2,131.7 82.3,125.0 54.3,115.2" fill="#314f1e" />
<polygon points="9.9,151.4 24.7,133.3 37.9,140.0 36.2,160.0 9.9,160.0" fill="#8a6d3c" />
<path d="M62.500 84.800l36 5.700 25-.5 24.500 5.500 8.400 10 21.400 5.500" stroke="#eef3f8" stroke-width="2.600" fill="none" stroke-linejoin="round"/>
<path d="M14 80l26 2M40 86l20 3M0 123l28-.8M0 130l16 0M6 58l30 2" stroke="#e6eef6" stroke-width="2" fill="none"/>
<polygon points="288.0,154.0 312.8,149.0 362.0,148.0 378.6,152.3 380.0,160.0 288.0,160.0" fill="#e6dfcc" />
</g>
<rect width="424" height="154" filter="url(#n1)" clip-path="url(#c1h)" opacity=".7"/>
<rect width="424" height="154" filter="url(#n1b)" clip-path="url(#c1d)" opacity=".4"/></svg>
<svg class="a" style="left:541px;top:1376.75px" width="32" height="32" viewBox="0 0 32 32" ><g fill="none" stroke="#111" stroke-width="1.900" stroke-linecap="round" stroke-linejoin="round">
<circle cx="16" cy="16" r="14.100"/><path d="M13 10.900l9.600 5.100-9.600 5.700z" stroke-width="1.700"/><path d="M17.200 5.600c3.200.6 5.600 2.200 7.300 4.500" stroke-width="1.700"/></g></svg>
<div class="vc" style="left:985.2px"></div>
<svg class="a" style="left:985.2px;top:1426px" width="423.2" height="154" viewBox="0 0 424 154" preserveAspectRatio="none"><defs><linearGradient id="i2s" x1="0" y1="0" x2="0" y2="1"><stop offset="0" stop-color="#4f8a96"/><stop offset=".05" stop-color="#7fb0b6"/><stop offset=".3" stop-color="#9cc0c0"/><stop offset=".55" stop-color="#8db5b7"/><stop offset=".8" stop-color="#92b9ba"/><stop offset="1" stop-color="#84adb0"/></linearGradient>
<filter id="b2" x="-5%" y="-5%" width="110%" height="110%"><feGaussianBlur stdDeviation="1.200"/></filter>
<filter id="b2b" x="-5%" y="-5%" width="110%" height="110%"><feGaussianBlur stdDeviation="0.600"/></filter>
<filter id="f2a" x="0" y="0" width="100%" height="100%"><feTurbulence type="fractalNoise" baseFrequency="0.012 0.13" numOctaves="3" seed="4"/><feColorMatrix values="0 0 0 0 .93  0 0 0 0 .96  0 0 0 0 .94  0 0 0 9 -4.1"/></filter>
<filter id="f2b" x="0" y="0" width="100%" height="100%"><feTurbulence type="fractalNoise" baseFrequency="0.014 0.15" numOctaves="3" seed="9"/><feColorMatrix values="0 0 0 0 .93  0 0 0 0 .96  0 0 0 0 .94  0 0 0 9 -4.9"/></filter>
<filter id="f2c" x="0" y="0" width="100%" height="100%"><feTurbulence type="fractalNoise" baseFrequency="0.02 0.16" numOctaves="2" seed="2"/><feColorMatrix values="0 0 0 0 .30  0 0 0 0 .50  0 0 0 0 .55  0 0 0 7 -3.9"/></filter>
<linearGradient id="g2m" x1="0" y1="0" x2="0" y2="1"><stop offset="0" stop-color="#fff"/><stop offset=".45" stop-color="#fff"/><stop offset="1" stop-color="#000"/></linearGradient><mask id="m2"><rect width="424" height="80" fill="url(#g2m)"/></mask>
<clipPath id="c2sea"><polygon points="0.0,0.0 424.0,0.0 424.0,154.0 330.0,154.0 290.0,143.0 200.0,128.0 110.0,112.0 40.0,96.0 0.0,90.0"/></clipPath></defs>
<rect width="424" height="154" fill="url(#i2s)"/>
<g clip-path="url(#c2sea)">
<rect width="424" height="154" filter="url(#f2c)" opacity=".55"/>
<rect width="424" height="80" filter="url(#f2a)" opacity=".9" mask="url(#m2)"/>
<rect y="0" width="424" height="154" filter="url(#f2b)" opacity=".85"/>
</g>
<g filter="url(#b2)" stroke="#eef4f1" fill="none" stroke-linecap="round">
<path d="M5 12h60M95 13l120 6M230 12c20-6 50-6 70 4M300 16l120 10" stroke-width="4" opacity=".8"/>
<path d="M5 70l30 4M0 78l60 6 60 14 40 14 60 12 70 10" stroke-width="6" opacity=".8"/>
<path d="M210 97l40 2" stroke-width="4" opacity=".7"/>
</g>
<g filter="url(#b2)">
<polygon points="0.0,90.0 40.0,96.0 110.0,112.0 200.0,128.0 290.0,143.0 330.0,154.0 0.0,154.0" fill="#c4d6cd"/>
<polygon points="0.0,97.0 40.0,104.0 110.0,120.0 190.0,136.0 250.0,148.0 268.0,154.0 0.0,154.0" fill="#dbc9a6"/>
<path d="M330 118c30 4 60 10 94 18M335 135c30 3 60 10 89 16" stroke="#5f8f96" stroke-width="5" fill="none"/>
<path d="M335 140c30 3 60 10 89 14" stroke="#e9f1ee" stroke-width="3" fill="none"/>
</g>
<g filter="url(#b2b)">
<rect x="295.600" y="136" width="12" height="18" fill="#dcae8c"/><rect x="310.400" y="136" width="10.500" height="18" fill="#d9a987"/>
<polygon points="303.0,112.0 323.5,104.0 324.0,133.0 296.5,135.0" fill="#e9ecea"/>
<polygon points="296.5,132.0 323.5,129.5 323.5,137.5 296.5,139.0" fill="#3d546c"/>
<polygon points="292.0,78.0 321.0,74.8 335.0,102.7 323.0,107.0 312.0,123.7 294.7,139.4 280.7,137.7 289.5,106.0" fill="#15151c"/>
<path d="M305 51c8 0 12 8 10 18-2 10-8 22-14 36-2-10-4-22-3-30-4-6-1-24 7-24z" fill="#a4522c"/>
</g></svg>
<svg class="a" style="left:1004.2px;top:1376.75px" width="32" height="32" viewBox="0 0 32 32" ><g fill="none" stroke="#111" stroke-width="1.900" stroke-linecap="round" stroke-linejoin="round">
<circle cx="16" cy="16" r="14.100"/><path d="M13 10.900l9.600 5.100-9.600 5.700z" stroke-width="1.700"/><path d="M17.200 5.600c3.200.6 5.600 2.200 7.300 4.500" stroke-width="1.700"/></g></svg>
<div class="vc" style="left:1448.4px"></div>
<svg class="a" style="left:1448.4px;top:1426px" width="423.2" height="154" viewBox="0 0 424 154" preserveAspectRatio="none"><defs><linearGradient id="i3s" x1="0" y1="0" x2="0" y2="1"><stop offset="0" stop-color="#8dbaec"/><stop offset=".6" stop-color="#bcd6f2"/><stop offset="1" stop-color="#e2ecf6"/></linearGradient>
<linearGradient id="i3w" x1="0" y1="0" x2="0" y2="1"><stop offset="0" stop-color="#1b5fa6"/><stop offset=".35" stop-color="#1d7fb8"/><stop offset=".75" stop-color="#1f96b8"/><stop offset="1" stop-color="#2aa5ba"/></linearGradient>
<radialGradient id="i3l" cx=".12" cy="0" r=".5"><stop offset="0" stop-color="#b5d3f5"/><stop offset="1" stop-color="#b5d3f5" stop-opacity="0"/></radialGradient>
<filter id="b3" x="-5%" y="-5%" width="110%" height="110%"><feGaussianBlur stdDeviation="1"/></filter>
<filter id="b3b" x="-5%" y="-5%" width="110%" height="110%"><feGaussianBlur stdDeviation="0.500"/></filter>
<filter id="f3a" x="0" y="0" width="100%" height="100%"><feTurbulence type="fractalNoise" baseFrequency="0.018 0.11" numOctaves="3" seed="5"/><feColorMatrix values="0 0 0 0 .94  0 0 0 0 .97  0 0 0 0 .97  0 0 0 9 -4.55"/></filter>
<filter id="f3b" x="0" y="0" width="100%" height="100%"><feTurbulence type="fractalNoise" baseFrequency="0.006 0.3" numOctaves="2" seed="8"/><feColorMatrix values="0 0 0 0 .08  0 0 0 0 .30  0 0 0 0 .55  0 0 0 5 -2.5"/></filter>
<filter id="f3c" x="0" y="0" width="100%" height="100%"><feTurbulence type="fractalNoise" baseFrequency="0.01 0.08" numOctaves="2" seed="3"/><feColorMatrix values="0 0 0 0 .95  0 0 0 0 .97  0 0 0 0 1  0 0 0 6 -3.4"/></filter>
<clipPath id="c3s"><polygon points="0.0,84.0 60.0,92.0 120.0,100.0 190.0,118.0 260.0,132.0 320.0,140.0 424.0,154.0 0.0,154.0"/></clipPath></defs>
<rect width="424" height="55" fill="url(#i3s)"/><rect width="424" height="55" fill="url(#i3l)"/>
<rect width="424" height="52" filter="url(#f3c)" opacity=".35"/>
<rect y="54.500" width="424" height="100" fill="url(#i3w)"/>
<rect y="56" width="424" height="98" filter="url(#f3b)" opacity=".3"/>
<rect x="0" y="53" width="38" height="4" fill="#3c5a78"/>
<rect width="424" height="154" filter="url(#f3a)" clip-path="url(#c3s)" opacity=".9"/>
<g filter="url(#b3)">
<path d="M0 89c30 6 60 10 90 12s60 10 90 22 50 12 70 12" stroke="#eef6f8" stroke-width="4" fill="none" opacity=".9"/>
<polygon points="0.0,111.5 42.5,120.0 85.0,133.0 112.0,145.0 140.0,154.0 0.0,154.0" fill="#e9e1d2"/>
<polygon points="0.0,108.0 42.5,116.0 85.0,129.0 125.0,146.0 150.0,154.0 140.0,154.0 112.0,145.0 85.0,133.0 42.5,120.0 0.0,111.5" fill="#f4f8f8"/>
<path d="M238 146c20-6 40-4 55 0s40 6 60 8" stroke="#eef6f8" stroke-width="6" fill="none" opacity=".9"/>
</g>
<g filter="url(#b3b)">
<path d="M121 91L88 110.500" stroke="#c48f6a" stroke-width="4" stroke-linecap="round"/><path d="M143.500 91L176 114" stroke="#c48f6a" stroke-width="4" stroke-linecap="round"/>
<rect x="128" y="143" width="5.500" height="11" fill="#c9956f"/><rect x="136" y="143" width="5.500" height="11" fill="#c9956f"/>
<polygon points="124.6,88.7 140.3,88.7 142.0,106.2 150.8,137.7 133.3,145.5 115.0,137.7 123.7,106.2" fill="#ece4f3"/>
<rect x="124" y="79" width="16.500" height="24" rx="5" fill="#6d4c34"/>
<ellipse cx="131.500" cy="75.600" rx="12.500" ry="7.500" fill="#dccdaa"/><ellipse cx="132.500" cy="76.500" rx="6" ry="4.500" fill="#7c7468"/>
<rect x="164" y="74" width="6" height="2.500" fill="#1c2a4a"/>
</g></svg>
<svg class="a" style="left:1467.4px;top:1376.75px" width="32" height="32" viewBox="0 0 32 32" ><g fill="none" stroke="#111" stroke-width="1.900" stroke-linecap="round" stroke-linejoin="round">
<circle cx="16" cy="16" r="14.100"/><path d="M13 10.900l9.600 5.100-9.600 5.700z" stroke-width="1.700"/><path d="M17.200 5.600c3.200.6 5.600 2.200 7.300 4.500" stroke-width="1.700"/></g></svg>
<div class="vc" style="left:1911.6px"></div>
<svg class="a" style="left:1911.6px;top:1426px" width="423.2" height="154" viewBox="0 0 424 154" preserveAspectRatio="none"><defs><linearGradient id="i4s" x1="0" y1="0" x2="1" y2="0"><stop offset="0" stop-color="#f5f7fb"/><stop offset=".55" stop-color="#eef2fa"/><stop offset=".8" stop-color="#d3ddf2"/><stop offset="1" stop-color="#b5c6ea"/></linearGradient>
<linearGradient id="i4c" x1="0" y1="0" x2="0" y2="1"><stop offset="0" stop-color="#fff" stop-opacity="0"/><stop offset=".45" stop-color="#f4f6fb" stop-opacity=".9"/><stop offset="1" stop-color="#f4f6fb"/></linearGradient>
<filter id="b4" x="-5%" y="-5%" width="110%" height="110%"><feGaussianBlur stdDeviation="0.800"/></filter>
<filter id="b4c" x="-10%" y="-10%" width="120%" height="120%"><feGaussianBlur stdDeviation="5"/></filter>
<filter id="f4a" x="0" y="0" width="100%" height="100%"><feTurbulence type="fractalNoise" baseFrequency="0.13 0.15" numOctaves="3" seed="6"/><feColorMatrix values="0 0 0 0 .27  0 0 0 0 .45  0 0 0 0 .20  0 0 0 10 -4.6"/></filter>
<filter id="f4b" x="0" y="0" width="100%" height="100%"><feTurbulence type="fractalNoise" baseFrequency="0.16 0.18" numOctaves="2" seed="12"/><feColorMatrix values="0 0 0 0 .14  0 0 0 0 .26  0 0 0 0 .10  0 0 0 10 -4.9"/></filter>
<filter id="f4r" x="0" y="0" width="100%" height="100%"><feTurbulence type="fractalNoise" baseFrequency="0.05 0.5" numOctaves="2" seed="2"/><feColorMatrix values="0 0 0 0 .25  0 0 0 0 .21  0 0 0 0 .18  0 0 0 7 -3.4"/></filter>
<filter id="f4m" x="0" y="0" width="100%" height="100%"><feTurbulence type="fractalNoise" baseFrequency="0.05 0.07" numOctaves="3" seed="21"/><feColorMatrix values="0 0 0 0 .80  0 0 0 0 .84  0 0 0 0 .93  0 0 0 6 -3.1"/></filter>
<clipPath id="c4t"><polygon points="0.0,0.0 155.0,0.0 150.0,6.0 120.0,12.0 80.0,20.0 62.0,40.0 40.0,52.0 0.0,64.0"/><polygon points="190.0,22.0 215.0,24.0 240.0,34.0 246.0,60.0 232.0,76.0 236.0,90.0 256.0,104.0 262.0,128.0 250.0,154.0 176.0,154.0 176.0,92.0 196.0,60.0"/></clipPath>
<clipPath id="c4r"><polygon points="17.8,38.0 162.8,9.3 177.7,9.3 126.0,59.0 3.8,62.0"/></clipPath>
<clipPath id="c4m"><polygon points="197.8,154.0 232.7,106.2 267.6,98.0 299.0,88.7 320.0,99.2 345.0,100.0 363.7,97.5 402.0,83.5 424.0,88.7 424.0,154.0"/></clipPath></defs>
<rect width="424" height="154" fill="url(#i4s)"/>
<rect x="200" y="20" width="224" height="80" fill="url(#i4c)"/>
<g filter="url(#b4c)"><ellipse cx="300" cy="60" rx="70" ry="22" fill="#c9d5ee"/><ellipse cx="400" cy="28" rx="36" ry="26" fill="#a9bde6" opacity=".7"/><ellipse cx="250" cy="20" rx="40" ry="16" fill="#fff"/></g>
<g filter="url(#b4)">
<polygon points="197.8,154.0 232.7,106.2 267.6,98.0 299.0,88.7 320.0,99.2 345.0,100.0 363.7,97.5 402.0,83.5 424.0,88.7 424.0,154.0" fill="#8496c2"/>
<polygon points="299.0,88.7 320.0,99.2 345.0,130.0 380.0,154.0 300.0,154.0 285.0,120.0" fill="#a7b5d6"/>
<polygon points="363.7,97.5 402.0,83.5 424.0,100.0 424.0,154.0 400.0,154.0" fill="#97a7cf"/>
<polygon points="232.0,106.0 270.0,97.0 300.0,130.0 290.0,154.0 215.0,154.0" fill="#7387b6"/>
</g>
<rect width="424" height="154" filter="url(#f4m)" clip-path="url(#c4m)" opacity=".45"/>
<g filter="url(#b4c)"><ellipse cx="265" cy="93" rx="40" ry="8" fill="#eef2fa" opacity=".85"/><ellipse cx="330" cy="88" rx="40" ry="7" fill="#eef2fa" opacity=".7"/></g>
<g clip-path="url(#c4t)"><rect width="424" height="154" filter="url(#f4a)"/><rect width="424" height="154" filter="url(#f4b)"/></g>
<g filter="url(#b4)">
<polygon points="0.0,0.0 140.0,0.0 120.0,8.0 70.0,14.0 50.0,40.0 20.0,52.0 0.0,58.0" fill="#386328" opacity=".8"/>
<polygon points="196.0,40.0 226.0,44.0 232.0,70.0 218.0,88.0 240.0,110.0 240.0,154.0 180.0,154.0 180.0,92.0" fill="#3f6c2e" opacity=".55"/>
<rect x="0" y="60" width="97" height="94" fill="#4d2718"/>
<path d="M0 72h97M0 84h97M0 96h97M0 108h97M0 120h97M0 132h97M0 144h97" stroke="#351a0f" stroke-width="2.500"/>
<polygon points="96.0,60.8 127.9,60.8 171.6,18.9 211.7,88.7 176.8,92.2 190.0,154.0 96.0,154.0" fill="#402a1b"/>
<polygon points="17.8,38.0 162.8,9.3 177.7,9.3 126.0,59.0 3.8,62.0" fill="#74675d"/>
</g>
<rect width="424" height="154" filter="url(#f4r)" clip-path="url(#c4r)" opacity=".85"/>
<g filter="url(#b4)">
<polygon points="177.7,9.3 228.3,83.5 212.6,90.5 171.6,22.0 130.0,61.0 126.0,59.0" fill="#7a4f2a"/>
<path d="M171.600 22l41 68.500" stroke="#4a2f18" stroke-width="2.500"/>
<polygon points="110.4,80.0 175.0,92.0 175.0,120.0 110.4,112.0" fill="#6e5a46"/>
<path d="M110 96l65 12" stroke="#3a281c" stroke-width="4"/>
<polygon points="100.0,116.0 170.0,124.0 170.0,132.0 100.0,126.0" fill="#7b5530"/>
<path d="M3.800 62l122-3" stroke="#2a1a10" stroke-width="3"/>
<rect x="74" y="142" width="22" height="12" fill="#e8e8ea"/><rect x="160" y="146" width="20" height="8" fill="#e8e8ea"/>
<ellipse cx="87" cy="135" rx="7" ry="4" fill="#2a2a2a"/><ellipse cx="172" cy="138" rx="7" ry="4" fill="#2a2a2a"/>
<ellipse cx="280" cy="148" rx="8" ry="4" fill="#3a3026"/><ellipse cx="368" cy="152" rx="8" ry="4" fill="#2a2420"/>
</g></svg>
<svg class="a" style="left:1930.6px;top:1376.75px" width="32" height="32" viewBox="0 0 32 32" ><g fill="none" stroke="#111" stroke-width="1.900" stroke-linecap="round" stroke-linejoin="round">
<circle cx="16" cy="16" r="14.100"/><path d="M13 10.900l9.600 5.100-9.600 5.700z" stroke-width="1.700"/><path d="M17.200 5.600c3.200.6 5.600 2.200 7.300 4.500" stroke-width="1.700"/></g></svg>
<div class="vc" style="left:2374.8px"></div>
<svg class="a" style="left:2374.8px;top:1425px" width="423.2" height="154" viewBox="0 0 424 154" preserveAspectRatio="none"><defs><radialGradient id="i5e" cx=".55" cy=".5" r=".55"><stop offset="0" stop-color="#0d1630"/><stop offset=".8" stop-color="#0b1228"/><stop offset=".93" stop-color="#0c1830"/><stop offset="1" stop-color="#18304e"/></radialGradient>
<linearGradient id="i5r" x1="0" y1="0" x2="1" y2="0"><stop offset="0" stop-color="#a8cde8"/><stop offset=".035" stop-color="#6f9cc2" stop-opacity=".85"/><stop offset=".09" stop-color="#2c4a6e" stop-opacity=".5"/><stop offset=".16" stop-color="#1a2c4a" stop-opacity="0"/></linearGradient>
<clipPath id="i5c"><rect width="424" height="154"/></clipPath>
<filter id="b5" x="-10%" y="-10%" width="120%" height="120%"><feGaussianBlur stdDeviation="1.200"/></filter>
<filter id="b5b" x="-30%" y="-30%" width="160%" height="160%"><feGaussianBlur stdDeviation="3"/></filter></defs>
<rect width="424" height="154" fill="#000"/>
<g clip-path="url(#i5c)">
<circle cx="212.400" cy="86" r="103" fill="url(#i5e)" filter="url(#b5)"/>
<circle cx="212.400" cy="86" r="102.500" fill="url(#i5r)" filter="url(#b5)"/>
<g filter="url(#b5b)"><ellipse cx="190" cy="45" rx="26" ry="18" fill="#1b2444"/><ellipse cx="230" cy="70" rx="20" ry="12" fill="#151d3a"/><ellipse cx="250" cy="120" rx="35" ry="25" fill="#111a36"/></g>
<g filter="url(#b5)"><ellipse cx="196" cy="44" rx="13" ry="8" fill="#c9a45c" opacity=".55"/><ellipse cx="200" cy="40" rx="6" ry="4" fill="#f0cc7a" opacity=".7"/><ellipse cx="180" cy="50" rx="5" ry="8" fill="#a88a50" opacity=".35"/><ellipse cx="285" cy="30" rx="4" ry="8" fill="#a88a50" opacity=".35"/></g>
</g></svg>
<svg class="a" style="left:2393.8px;top:1376.75px" width="32" height="32" viewBox="0 0 32 32" ><g fill="none" stroke="#111" stroke-width="1.900" stroke-linecap="round" stroke-linejoin="round">
<circle cx="16" cy="16" r="14.100"/><path d="M13 10.900l9.600 5.100-9.600 5.700z" stroke-width="1.700"/><path d="M17.200 5.600c3.200.6 5.600 2.200 7.300 4.500" stroke-width="1.700"/></g></svg>
<span class="t" style="left:109.0px;top:33.1px;font-size:31.5px;color:#fff;transform:scaleX(0.9516);-webkit-text-stroke:0.7px #fff;">ZylkerTravels</span>
<span class="t" style="left:476.0px;top:35.2px;font-size:29.5px;color:#d3dae6;transform:scaleX(1.0132);-webkit-text-stroke:0.7px #d3dae6;">Home</span>
<span class="t" style="left:613.6px;top:35.2px;font-size:29.5px;color:#d3dae6;transform:scaleX(0.9648);-webkit-text-stroke:0.7px #d3dae6;">Posts</span>
<span class="t" style="left:743.1px;top:35.2px;font-size:29.5px;color:#d3dae6;transform:scaleX(0.9318);-webkit-text-stroke:0.7px #d3dae6;">Messages</span>
<span class="t" style="left:926.9px;top:35.2px;font-size:29.5px;color:#d3dae6;transform:scaleX(1.0729);-webkit-text-stroke:0.7px #d3dae6;">Monitor</span>
<span class="t" style="left:1092.0px;top:35.2px;font-size:29.5px;color:#d3dae6;transform:scaleX(0.9753);-webkit-text-stroke:0.7px #d3dae6;">Connections</span>
<span class="t" style="left:1312.0px;top:35.2px;font-size:29.5px;color:#d3dae6;transform:scaleX(0.9732);-webkit-text-stroke:0.7px #d3dae6;">Collaborate</span>
<span class="t" style="left:1518.1px;top:35.2px;font-size:29.5px;color:#fff;transform:scaleX(0.9604);-webkit-text-stroke:0.7px #fff;">Reports</span>
<span class="t" style="left:1675.2px;top:35.2px;font-size:29.5px;color:#d3dae6;transform:scaleX(0.9226);-webkit-text-stroke:0.7px #d3dae6;">Lead Forms</span>
<span class="t" style="left:2235.5px;top:39.2px;font-size:25.5px;color:#fff;transform:scaleX(1.0407);-webkit-text-stroke:1.0px #fff;">New Post</span>
<span class="t" style="left:2071.1px;top:145.7px;font-size:28.5px;color:#1f1f1f;transform:scaleX(0.9360);-webkit-text-stroke:0.6px #1f1f1f;">Last 15 Days</span>
<span class="t" style="left:2331.6px;top:147.5px;font-size:29.0px;color:#333;transform:scaleX(0.9217);-webkit-text-stroke:0.35px #333;">Email</span>
<span class="t" style="left:2522.1px;top:147.5px;font-size:29.0px;color:#333;transform:scaleX(0.9277);-webkit-text-stroke:0.35px #333;">Schedule</span>
<span class="t" style="left:2757.0px;top:147.5px;font-size:29.0px;color:#333;transform:scaleX(0.9878);-webkit-text-stroke:0.35px #333;">Export</span>
<span class="t" style="left:29.5px;top:279.1px;font-size:27.0px;color:#8c8c8c;transform:scaleX(0.8970);-webkit-text-stroke:0.35px #8c8c8c;">YOUTUBE REPORTS</span>
<span class="t" style="left:73.4px;top:360.0px;font-size:28.5px;color:#111;transform:scaleX(0.9479);-webkit-text-stroke:0.35px #111;">Summary</span>
<span class="t" style="left:74.3px;top:442.1px;font-size:28.5px;color:#111;transform:scaleX(0.9669);-webkit-text-stroke:0.35px #111;">Audience</span>
<span class="t" style="left:72.5px;top:524.1px;font-size:28.5px;color:#111;transform:scaleX(0.8975);font-weight:700;">Posts &amp; Engagement</span>
<span class="t" style="left:74.3px;top:606.4px;font-size:28.0px;color:#111;transform:scaleX(0.9916);-webkit-text-stroke:0.35px #111;">Video Performance</span>
<span class="t" style="left:73.4px;top:688.5px;font-size:28.0px;color:#111;transform:scaleX(0.9451);-webkit-text-stroke:0.35px #111;">Cards &amp; End Screen</span>
<span class="t" style="left:521.1px;top:299.2px;font-size:37.0px;color:#000;transform:scaleX(0.9335);-webkit-text-stroke:1.0px #000;">Number of Posts vs Engagement</span>
<span class="t" style="left:523.9px;top:381.3px;font-size:25.0px;color:#d9291c;transform:scaleX(0.9033);font-style:italic;-webkit-text-stroke:0.35px #d9291c;">Avg. Posts Per Day: 1</span>
<span class="t" style="left:2493.6px;top:381.4px;font-size:25.0px;color:#d9291c;transform:scaleX(0.9098);font-style:italic;-webkit-text-stroke:0.35px #d9291c;">Avg. Engagments Per Day: 39</span>
<span class="t" style="left:1423.7px;top:1119.8px;font-size:29.0px;color:#000;transform:scaleX(1.0367);font-weight:700;">22</span>
<span class="t" style="left:1461.1px;top:1120.1px;font-size:28.5px;color:#000;transform:scaleX(0.9391);-webkit-text-stroke:0.35px #000;">Posts</span>
<span class="t" style="left:1644.0px;top:1119.8px;font-size:29.0px;color:#000;transform:scaleX(1.0217);font-weight:700;">587</span>
<span class="t" style="left:1698.1px;top:1120.1px;font-size:28.5px;color:#000;transform:scaleX(0.9425);-webkit-text-stroke:0.35px #000;">Engagement</span>
<span class="t" style="left:522.0px;top:1275.1px;font-size:36.5px;color:#000;transform:scaleX(0.9464);-webkit-text-stroke:1.0px #000;">Top Videos By</span>
<span class="t" style="left:783.7px;top:1283.0px;font-size:26.5px;color:#1a1a1a;transform:scaleX(1.0374);-webkit-text-stroke:0.9px #1a1a1a;">Engagement Rate</span>
<span class="t" style="left:583.5px;top:1380.7px;font-size:26.0px;color:#858585;transform:scaleX(0.9112);-webkit-text-stroke:0.35px #858585;">27 Jan 2021 04:46 PM</span>
<span class="t" style="left:1046.7px;top:1380.7px;font-size:26.0px;color:#858585;transform:scaleX(0.9268);-webkit-text-stroke:0.35px #858585;">20 Jan 2021 07:55 AM</span>
<span class="t" style="left:1509.9px;top:1380.7px;font-size:26.0px;color:#858585;transform:scaleX(0.9268);-webkit-text-stroke:0.35px #858585;">20 Jan 2021 07:51 AM</span>
<span class="t" style="left:1973.1px;top:1380.7px;font-size:26.0px;color:#858585;transform:scaleX(0.9268);-webkit-text-stroke:0.35px #858585;">20 Jan 2021 07:50 AM</span>
<span class="t" style="left:2436.3px;top:1380.7px;font-size:26.0px;color:#858585;transform:scaleX(0.9268);-webkit-text-stroke:0.35px #858585;">20 Jan 2021 07:50 AM</span>
<div class="a" style="left:0;top:1562px;width:497px;height:14px;background:linear-gradient(to bottom,rgba(0,0,0,0),rgba(0,0,0,.09))"></div>
<div class="a" style="left:0px;top:1576px;width:497px;height:3px;background:#fff;"></div>
<div class="a" style="left:2820px;top:1563px;width:60px;height:13px;background:linear-gradient(to bottom,rgba(0,0,0,0),rgba(0,0,0,.09))"></div>
<div class="a" style="left:2821px;top:1576px;width:59px;height:3px;background:#fff;"></div>
<div class="a" style="left:0px;top:1579px;width:2880px;height:1px;background:#ececec;"></div>
<div class="a" style="left:0px;top:0px;width:2880px;height:1px;background:#fff;"></div>
<div class="a" style="left:0px;top:0px;width:1px;height:1580px;background:#ececec;"></div>
<div class="a" style="left:2879px;top:0px;width:1px;height:1580px;background:#ececec;"></div>
</body></html>
